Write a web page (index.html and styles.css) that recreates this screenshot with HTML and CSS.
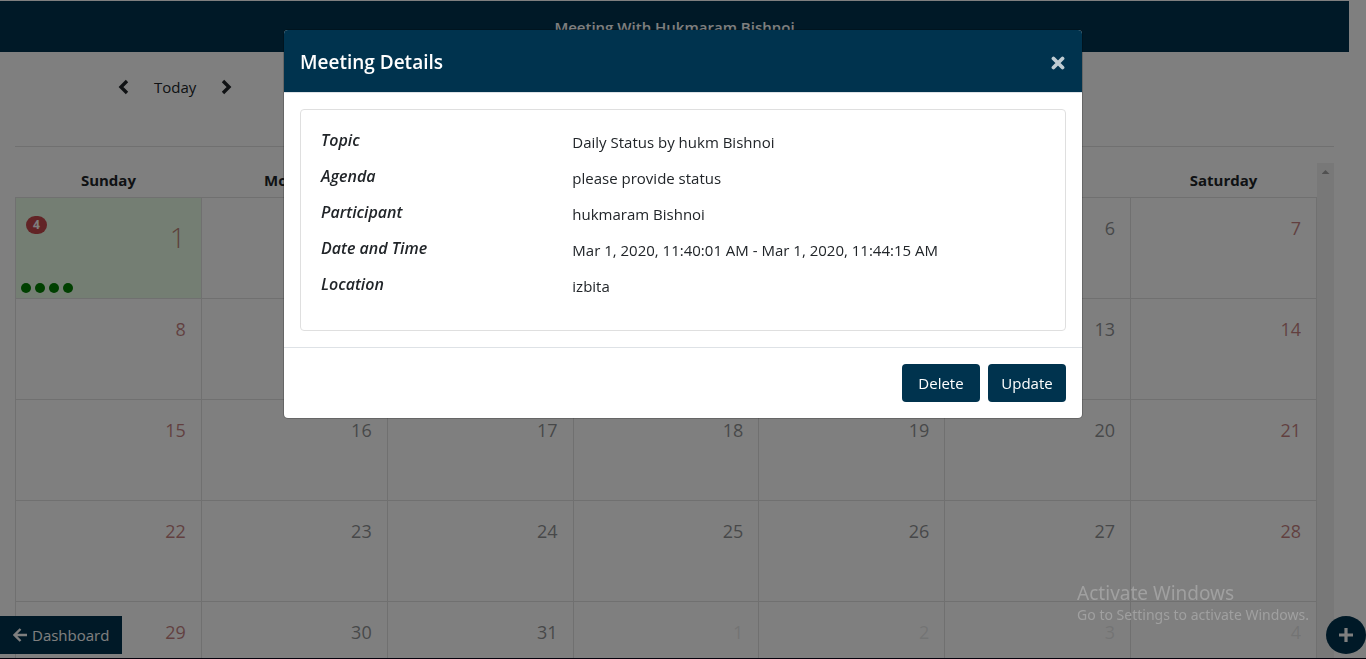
FILE: index.html
```html
<!DOCTYPE html>
<html lang="en">
<head>
<meta charset="utf-8">
<title>Meeting Details</title>
<link rel="stylesheet" href="styles.css">
</head>
<body>
<div class="page">
  <header class="topbar"><h1 class="topbar-title">Meeting With Hukmaram Bishnoi</h1></header>
  <main class="content">
    <nav class="toolbar" aria-label="Calendar navigation">
      <button class="nav-btn" type="button" aria-label="Previous"><svg width="12" height="16" viewBox="0 0 12 16"><path d="M10 2 4 8l6 6" fill="none" stroke="currentColor" stroke-width="3.4"/></svg></button>
      <button class="nav-btn nav-today" type="button">Today</button>
      <button class="nav-btn" type="button" aria-label="Next"><svg width="12" height="16" viewBox="0 0 12 16"><path d="m3 2 6 6-6 6" fill="none" stroke="currentColor" stroke-width="3.4"/></svg></button>
    </nav>
    <div class="calendar">
      <table class="month">
        <thead>
          <tr><th>Sunday</th><th>Monday</th><th>Tuesday</th><th>Wednesday</th><th>Thursday</th><th>Friday</th><th>Saturday</th></tr>
        </thead>
        <tbody>
          <tr>
            <td class="today weekend">
              <div class="cell">
                <div class="cell-top"><span class="badge">4</span><span class="num">1</span></div>
                <div class="events"><i class="dot"></i><i class="dot"></i><i class="dot"></i><i class="dot"></i></div>
              </div>
            </td>
            <td><span class="num">2</span></td><td><span class="num">3</span></td><td><span class="num">4</span></td><td><span class="num">5</span></td><td><span class="num">6</span></td><td class="weekend"><span class="num">7</span></td>
          </tr>
          <tr><td class="weekend"><span class="num">8</span></td><td><span class="num">9</span></td><td><span class="num">10</span></td><td><span class="num">11</span></td><td><span class="num">12</span></td><td><span class="num">13</span></td><td class="weekend"><span class="num">14</span></td></tr>
          <tr><td class="weekend"><span class="num">15</span></td><td><span class="num">16</span></td><td><span class="num">17</span></td><td><span class="num">18</span></td><td><span class="num">19</span></td><td><span class="num">20</span></td><td class="weekend"><span class="num">21</span></td></tr>
          <tr><td class="weekend"><span class="num">22</span></td><td><span class="num">23</span></td><td><span class="num">24</span></td><td><span class="num">25</span></td><td><span class="num">26</span></td><td><span class="num">27</span></td><td class="weekend"><span class="num">28</span></td></tr>
          <tr><td class="weekend"><span class="num">29</span></td><td><span class="num">30</span></td><td><span class="num">31</span></td><td class="outside"><span class="num">1</span></td><td class="outside"><span class="num">2</span></td><td class="outside"><span class="num">3</span></td><td class="outside"><span class="num">4</span></td></tr>
        </tbody>
      </table>
      <div class="scroll-track"><span class="scroll-arrow"></span></div>
    </div>
  </main>
</div>

<a class="dashboard" href="#"><svg width="14" height="14" viewBox="0 0 14 14"><path d="M7.500 1 1.500 7l6 6M2 7h12" fill="none" stroke="currentColor" stroke-width="2.400"/></svg>Dashboard</a>
<button class="add" type="button" aria-label="Add meeting"><svg width="14" height="14" viewBox="0 0 14 14"><path d="M7 0v14M0 7h14" stroke="currentColor" stroke-width="3.200"/></svg></button>

<div class="backdrop">
  <section class="modal" role="dialog" aria-labelledby="modal-title">
    <header class="modal-header">
      <h2 class="modal-title" id="modal-title">Meeting Details</h2>
      <button class="close" type="button" aria-label="Close"><svg width="14" height="14" viewBox="0 0 14 14"><path d="m2.500 2.500 9 9m0-9-9 9" stroke="currentColor" stroke-width="3.800" stroke-linecap="round"/></svg></button>
    </header>
    <div class="modal-body">
      <dl class="card">
        <dt>Topic</dt><dd>Daily Status by hukm Bishnoi</dd>
        <dt>Agenda</dt><dd>please provide status</dd>
        <dt>Participant</dt><dd>hukmaram Bishnoi</dd>
        <dt>Date and Time</dt><dd>Mar 1, 2020, 11:40:01 AM - Mar 1, 2020, 11:44:15 AM</dd>
        <dt>Location</dt><dd>izbita</dd>
      </dl>
    </div>
    <footer class="modal-footer">
      <button class="btn" type="button">Delete</button>
      <button class="btn" type="button">Update</button>
    </footer>
  </section>
</div>

<aside class="watermark"><p class="watermark-title">Activate Windows</p><p class="watermark-text">Go to Settings to activate Windows.</p></aside>
</body>
</html>
```

FILE: styles.css
```css
* { box-sizing: border-box; }

body {
  margin: 0;
  font: 15px/24px "Open Sans", "Noto Sans", sans-serif;
  color: #212529;
  background: #fff;
}

button { font: inherit; color: inherit; border: 0; background: none; cursor: pointer; }
svg { display: block; }

.page {
  height: 100vh;
  padding-right: 17px;
  display: flex;
  flex-direction: column;
  border-top: 1px solid #fff;
}

.topbar {
  height: 51px;
  flex: none;
  display: flex;
  align-items: center;
  justify-content: center;
  background: #00334e;
  color: #fff;
}
.topbar-title { margin: 0; font-size: 15px; line-height: 24px; font-weight: 600; }

.content {
  flex: 1;
  min-height: 0;
  padding: 0 15px;
  display: flex;
  flex-direction: column;
}

.toolbar {
  height: 95px;
  flex: none;
  padding: 23px 0 0 102px;
  display: flex;
  align-items: flex-start;
  border-bottom: 1px solid #e1e1e1;
}
.nav-btn { height: 24px; padding: 0; display: flex; align-items: center; }
.nav-today { margin: 0 24px 0 25px; }

.calendar { flex: 1; min-height: 0; margin-top: 16px; display: flex; align-items: flex-start; overflow: hidden; }
.month { flex: 1; width: 100%; border-collapse: collapse; table-layout: fixed; }
.month th { height: 34px; padding: 0; font-size: 15px; font-weight: 700; }
.month td {
  height: 101px;
  padding: 17px 15px 0 0;
  vertical-align: top;
  text-align: right;
  border: 1px solid #e1e1e1;
}
.num { font-size: 18px; line-height: 26px; opacity: .5; }
.weekend .num { color: #8b0000; }
.outside .num { color: #212529; opacity: .1; }

.month .today { padding: 0; background: #e8fde7; }
.cell { height: 100px; padding: 17px 15px 5px 5px; display: flex; flex-direction: column; justify-content: space-between; }
.cell-top { display: flex; align-items: flex-start; justify-content: space-between; }
.today .num { font-size: 28px; line-height: 44px; font-weight: 300; }
.badge {
  margin: 1px 0 0 5px;
  padding: 0 7px;
  border-radius: 10px;
  font-size: 12px;
  line-height: 18px;
  font-weight: 700;
  color: #fff;
  background: #c5494d;
}
.events { display: flex; gap: 4px; }
.dot { width: 10px; height: 10px; border-radius: 50%; background: #008000; }

.scroll-track { width: 17px; flex: none; align-self: stretch; display: flex; justify-content: center; background: #f1f1f1; }
.scroll-arrow { width: 8px; height: 4px; margin-top: 7px; background: #a3a3a3; clip-path: polygon(50% 0, 100% 100%, 0 100%); }

.dashboard {
  position: fixed;
  left: 0;
  bottom: 5px;
  height: 38px;
  padding: 0 13px;
  display: flex;
  align-items: center;
  gap: 5px;
  color: #fff;
  background: #00334e;
  text-decoration: none;
}
.add {
  position: fixed;
  right: 0;
  bottom: 5px;
  width: 40px;
  height: 38px;
  padding: 0;
  display: grid;
  place-items: center;
  border-radius: 50%;
  color: #fff;
  background: #00334e;
}

.backdrop {
  position: fixed;
  inset: 0;
  padding-top: 29px;
  border-bottom: 1px solid #05010c;
  background: rgba(0, 0, 0, .5);
}
.modal {
  max-width: 800px;
  margin: 0 auto;
  border: 1px solid rgba(0, 0, 0, .2);
  border-radius: 5px;
  background: #fff;
  background-clip: padding-box;
  overflow: hidden;
}
.modal-header {
  padding: 17px 16px 14px;
  display: flex;
  align-items: center;
  justify-content: space-between;
  border-bottom: 1px solid #dee2e6;
  color: #fff;
  background: #00334e;
}
.modal-title { margin: 0; font-size: 19px; line-height: 31px; font-weight: 600; }
.close { padding: 1px; color: #fff; opacity: .75; }

.modal-body { padding: 16px; }
.card {
  margin: 0;
  padding: 20px 20px 32px;
  display: grid;
  grid-template-columns: 1fr 2fr;
  column-gap: 15px;
  row-gap: 12px;
  border: 1px solid #dfdfdf;
  border-radius: 4px;
}
.card dt { font-size: 16px; font-weight: 600; font-style: italic; line-height: 20px; }
.card dd { margin: 0; line-height: 24px; }

.modal-footer {
  padding: 16px;
  display: flex;
  justify-content: flex-end;
  gap: 8px;
  border-top: 1px solid #dee2e6;
}
.btn { width: 78px; height: 38px; padding: 0; border-radius: 4px; color: #fff; background: #00334e; }

.watermark { position: fixed; right: 57px; bottom: 34px; font-family: "Noto Sans", sans-serif; color: #a0a0a0; }
.watermark p { margin: 0; }
.watermark-title { font-size: 19px; line-height: 24px; }
.watermark-text { font-size: 14px; line-height: 20px; }
```
